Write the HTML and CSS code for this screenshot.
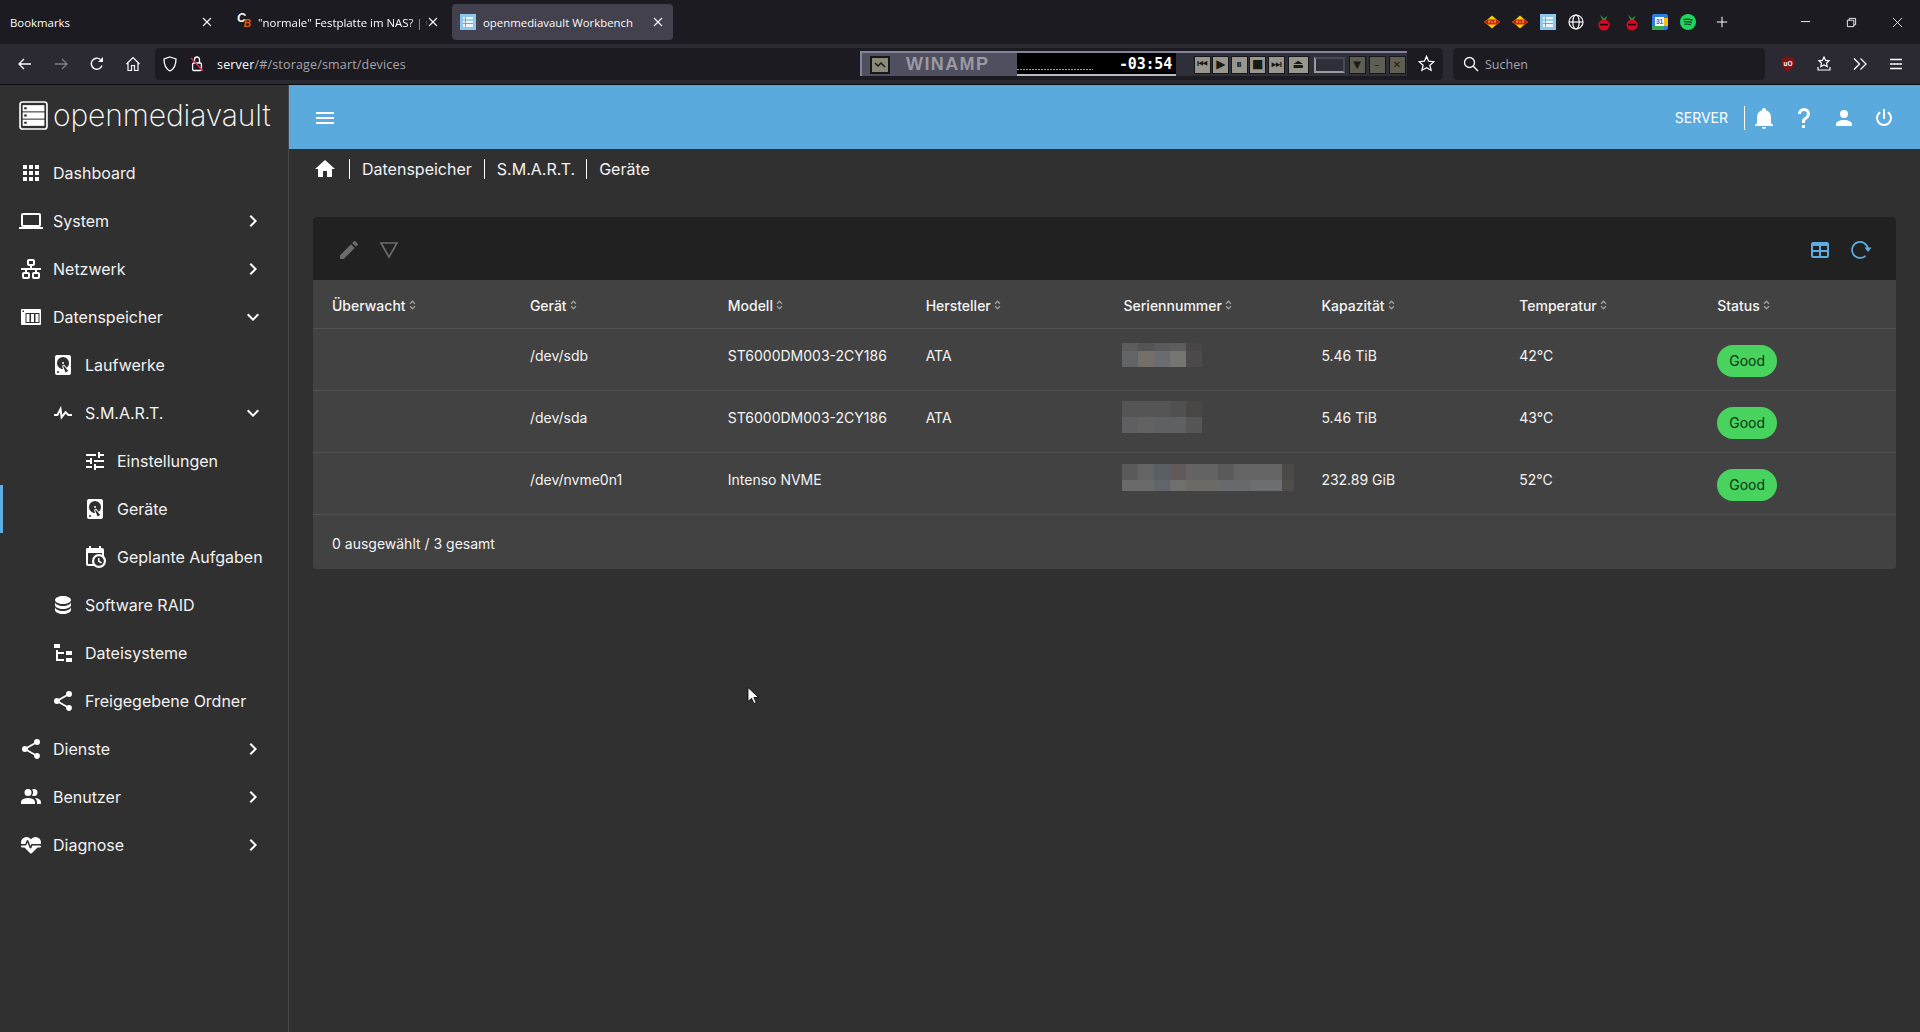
FILE: index.html
```html
<!DOCTYPE html>
<html lang="de">
<head>
<meta charset="utf-8">
<title>openmediavault Workbench</title>
<link rel="stylesheet" href="styles.css">
</head>
<body>
<svg class="defs" width="0" height="0" aria-hidden="true">
  <symbol id="i-apps" viewBox="0 0 24 24"><path d="M16,20H20V16H16M16,14H20V10H16M10,8H14V4H10M16,8H20V4H16M10,14H14V10H10M4,14H8V10H4M4,20H8V16H4M10,20H14V16H10M4,8H8V4H4V8Z"/></symbol>
  <symbol id="i-laptop" viewBox="0 0 24 24"><path d="M4,6H20V16H4M20,18A2,2 0 0,0 22,16V6C22,4.89 21.1,4 20,4H4C2.89,4 2,4.89 2,6V16A2,2 0 0,0 4,18H0V20H24V18H20Z"/></symbol>
  <symbol id="i-lan" viewBox="0 0 24 24"><path d="M10,2C8.89,2 8,2.89 8,4V7C8,8.11 8.89,9 10,9H11V11H2V13H6V15H5C3.89,15 3,15.89 3,17V20C3,21.11 3.89,22 5,22H9C10.11,22 11,21.11 11,20V17C11,15.89 10.11,15 9,15H8V13H16V15H15C13.89,15 13,15.89 13,17V20C13,21.11 13.89,22 15,22H19C20.11,22 21,21.11 21,20V17C21,15.89 20.11,15 19,15H18V13H22V11H13V9H14C15.11,9 16,8.11 16,7V4C16,2.89 15.11,2 14,2H10M10,4H14V7H10V4M5,17H9V20H5V17M15,17H19V20H15V17Z"/></symbol>
  <symbol id="i-nas" viewBox="0 0 24 24"><path fill-rule="evenodd" d="M3,4H21A1,1 0 0,1 22,5V19A1,1 0 0,1 21,20H3A1,1 0 0,1 2,19V5A1,1 0 0,1 3,4ZM3.5,5.5V7H5V5.5ZM6.5,8V18H20.5V8Z"/><path d="M7.5,9H10.5V17H7.5ZM12,9H15V17H12ZM16.5,9H19.5V17H16.5Z"/></symbol>
  <symbol id="i-hdd" viewBox="0 0 24 24"><path d="M6,2H18A2,2 0 0,1 20,4V20A2,2 0 0,1 18,22H6A2,2 0 0,1 4,20V4A2,2 0 0,1 6,2M12,4A6,6 0 0,0 6,10C6,13.31 8.69,16 12.1,16L11.22,13.77C10.95,13.29 11.11,12.68 11.59,12.4L12.45,11.9C12.93,11.63 13.54,11.79 13.82,12.27L15.74,14.69C17.12,13.59 18,11.9 18,10A6,6 0 0,0 12,4M12,9A1,1 0 0,1 13,10A1,1 0 0,1 12,11A1,1 0 0,1 11,10A1,1 0 0,1 12,9M7,18A1,1 0 0,0 6,19A1,1 0 0,0 7,20A1,1 0 0,0 8,19A1,1 0 0,0 7,18M12.09,13.27L14.58,19.58L17.17,18.08L12.95,12.77L12.09,13.27Z"/></symbol>
  <symbol id="i-pulse" viewBox="0 0 24 24"><path d="M3,13H5.79L10.1,4.79L11.28,13.75L14.5,9.66L17.83,13H21V15H17L14.67,12.67L9.92,18.73L8.94,11.31L7,15H3V13Z"/></symbol>
  <symbol id="i-tune" viewBox="0 0 24 24"><path d="M3,17V19H9V17H3M3,5V7H13V5H3M13,21V19H21V17H13V15H11V21H13M7,9V11H3V13H7V15H9V9H7M21,13V11H11V13H21M15,9H17V7H21V5H17V3H15V9Z"/></symbol>
  <symbol id="i-cal" viewBox="0 0 24 24"><path d="M5,8H19V3H18V1H16V3H8V1H6V3H5C3.9,3 3,3.9 3,5V8Z"/><path d="M15,13H16.5V15.82L18.94,17.23L18.19,18.53L15,16.69V13M19,8H5V19H9.67C9.24,18.09 9,17.07 9,16A7,7 0 0,1 16,9C17.07,9 18.09,9.24 19,9.67V8M5,21C3.89,21 3,20.1 3,19V5C3,3.89 3.89,3 5,3H6V1H8V3H16V1H18V3H19A2,2 0 0,1 21,5V11.1C22.24,12.36 23,14.09 23,16A7,7 0 0,1 16,23C14.09,23 12.36,22.24 11.1,21H5M16,11.15A4.85,4.85 0 0,0 11.15,16C11.15,18.68 13.32,20.85 16,20.85A4.85,4.85 0 0,0 20.85,16C20.85,13.32 18.68,11.15 16,11.15Z"/></symbol>
  <symbol id="i-db" viewBox="0 0 24 24"><path d="M12,3C7.58,3 4,4.79 4,7C4,9.21 7.58,11 12,11C16.42,11 20,9.21 20,7C20,4.79 16.42,3 12,3M4,9V12C4,14.21 7.58,16 12,16C16.42,16 20,14.21 20,12V9C20,11.21 16.42,13 12,13C7.58,13 4,11.21 4,9M4,14V17C4,19.21 7.58,21 12,21C16.42,21 20,19.21 20,17V14C20,16.21 16.42,18 12,18C7.58,18 4,16.21 4,14Z"/></symbol>
  <symbol id="i-tree" viewBox="0 0 24 24"><path d="M3,3H9V7H3V3M15,10H21V14H15V10M15,17H21V21H15V17M13,13H7V18H13V20H7L5,20V9H7V11H13V13Z"/></symbol>
  <symbol id="i-share" viewBox="0 0 24 24"><path d="M18,16.08C17.24,16.08 16.56,16.38 16.04,16.85L8.91,12.7C8.96,12.47 9,12.24 9,12C9,11.76 8.96,11.53 8.91,11.3L15.96,7.19C16.5,7.69 17.21,8 18,8A3,3 0 0,0 21,5A3,3 0 0,0 18,2A3,3 0 0,0 15,5C15,5.24 15.04,5.47 15.09,5.7L8.04,9.81C7.5,9.31 6.79,9 6,9A3,3 0 0,0 3,12A3,3 0 0,0 6,15C6.79,15 7.5,14.69 8.04,14.19L15.16,18.34C15.11,18.55 15.08,18.77 15.08,19C15.08,20.61 16.39,21.91 18,21.91C19.61,21.91 20.92,20.61 20.92,19A2.92,2.92 0 0,0 18,16.08Z"/></symbol>
  <symbol id="i-users" viewBox="0 0 24 24"><path d="M16 17V19H2V17S2 13 9 13 16 17 16 17M12.5 7.5A3.5 3.5 0 1 0 9 11A3.5 3.5 0 0 0 12.5 7.5M15.94 13A5.32 5.32 0 0 1 18 17V19H22V17S22 13.37 15.94 13M15 4A3.39 3.39 0 0 0 13.07 4.59A5 5 0 0 1 13.07 10.41A3.39 3.39 0 0 0 15 11A3.5 3.5 0 0 0 15 4Z"/></symbol>
  <symbol id="i-heart" viewBox="0 0 24 24"><path d="M7.5,4A5.5,5.5 0 0,0 2,9.5C2,10 2.09,10.5 2.22,11H6.3L7.57,7.63C7.87,6.83 9.05,6.75 9.43,7.63L11.5,13L12.09,11.58C12.22,11.25 12.57,11 13,11H21.78C21.91,10.5 22,10 22,9.5A5.5,5.5 0 0,0 16.5,4C14.64,4 13,4.93 12,6.36C11,4.93 9.36,4 7.5,4V4M3,12.5A1,1 0 0,0 2,13.5A1,1 0 0,0 3,14.5H5.44L11,20C12,20.9 12,20.9 13,20L18.56,14.5H21A1,1 0 0,0 22,13.5A1,1 0 0,0 21,12.5H13.4L12.47,14.8C12.07,15.81 10.92,15.67 10.55,14.83L8.5,9.5L7.54,11.83C7.39,12.21 7.05,12.5 6.6,12.5H3Z"/></symbol>
  <symbol id="i-right" viewBox="0 0 24 24"><path d="M8.59,16.58L13.17,12L8.59,7.41L10,6L16,12L10,18L8.59,16.58Z"/></symbol>
  <symbol id="i-down" viewBox="0 0 24 24"><path d="M7.41,8.58L12,13.17L16.59,8.58L18,10L12,16L6,10L7.41,8.58Z"/></symbol>
  <symbol id="i-sort" viewBox="0 0 8 12"><path d="M1.2,4.5L4,1.7L6.8,4.5M1.2,7.5L4,10.3L6.8,7.5" fill="none" stroke="currentColor" stroke-width="1.5"/></symbol>
  <symbol id="i-x" viewBox="0 0 12 12"><path d="M2,2L10,10M10,2L2,10" fill="none" stroke="currentColor" stroke-width="1.1"/></symbol>
  <symbol id="i-fritz" viewBox="0 0 16 14"><path d="M8,0.5L12,4L16,7L12,10L8,13.5L4,10L0,7L4,4Z" fill="#f5d000"/><path d="M0.3,7L3.5,4.6H12.5L15.7,7L12.5,9.4H3.5Z" fill="#cc1a14"/><path d="M4.5,6H6.5M5,6V8.3M8,6V8.3M10,6H12M11,6V8.3" stroke="#f5d000" stroke-width=".9"/></symbol>
  <symbol id="i-rasp" viewBox="0 0 12 17"><path d="M2,0.5L6,4.5L9.5,1.5L7.5,6.5H4.5Z" fill="#2f8f33"/><circle cx="6" cy="11" r="5.6" fill="#d00c22"/><rect x="2" y="9.8" width="8" height="1.6" fill="#1d0307"/></symbol>
  <symbol id="i-omv" viewBox="0 0 16 16"><rect width="16" height="16" fill="#8ec6ee"/><rect x="3" y="3" width="10" height="10" fill="#e9f4fb"/><path d="M3,6H13M3,9.5H13M5.5,3V13" stroke="#5dade2" stroke-width="1"/></symbol>
</svg>

<header class="tabbar">
  <div class="tab tab-bookmarks"><span class="tab-label">Bookmarks</span><svg class="tab-x"><use href="#i-x"/></svg></div>
  <div class="tab tab-forum"><span class="cb-icon"><span class="cb-c">C</span><span class="cb-b">B</span></span><span class="tab-label">"normale" Festplatte im NAS? | C</span><svg class="tab-x"><use href="#i-x"/></svg></div>
  <div class="tab tab-active"><svg class="fav"><use href="#i-omv"/></svg><span class="tab-label">openmediavault Workbench</span><svg class="tab-x"><use href="#i-x"/></svg></div>
  <div class="pinned">
    <span class="pin"><svg class="fav-wide"><use href="#i-fritz"/></svg></span>
    <span class="pin"><svg class="fav-wide"><use href="#i-fritz"/></svg></span>
    <span class="pin"><svg class="fav"><use href="#i-omv"/></svg></span>
    <span class="pin"><svg class="fav" viewBox="0 0 16 16"><circle cx="8" cy="8" r="7" fill="none" stroke="#fbfbfe" stroke-width="1.2"/><ellipse cx="8" cy="8" rx="3.2" ry="7" fill="none" stroke="#fbfbfe" stroke-width="1.2"/><path d="M1,8H15" stroke="#fbfbfe" stroke-width="1.2"/></svg></span>
    <span class="pin"><svg class="fav-tall"><use href="#i-rasp"/></svg></span>
    <span class="pin"><svg class="fav-tall"><use href="#i-rasp"/></svg></span>
    <span class="pin"><svg class="fav" viewBox="0 0 16 16"><rect width="16" height="16" rx="2" fill="#2f7de1"/><rect x="0" y="12" width="12" height="4" fill="#34a853"/><rect x="12" y="4" width="4" height="8" fill="#fbbc04"/><rect x="3" y="3" width="9" height="9" fill="#f2f6fc"/><text class="cal-text" x="7.5" y="10.4">31</text></svg></span>
    <span class="pin"><svg class="fav" viewBox="0 0 16 16"><circle cx="8" cy="8" r="8" fill="#1ed760"/><path d="M3.5,5.6C6.5,4.8 9.8,5 12.6,6.4M4,8C6.6,7.3 9.4,7.5 11.8,8.8M4.5,10.3C6.6,9.8 8.9,10 10.8,11" fill="none" stroke="#14331f" stroke-width="1.2"/></svg></span>
    <svg class="plus" viewBox="0 0 14 14"><path d="M7,1V13M1,7H13" stroke="#fbfbfe" stroke-width="1.2"/></svg>
  </div>
  <div class="winctl">
    <span class="winbtn"><svg class="ctl" viewBox="0 0 12 12"><path d="M1,5H11" stroke="#fbfbfe"/></svg></span>
    <span class="winbtn"><svg class="ctl" viewBox="0 0 12 12"><path d="M1.5,3.5H8.5V10.5H1.5ZM3.5,3.5V1.5H10.5V8.5H8.5" fill="none" stroke="#fbfbfe"/></svg></span>
    <span class="winbtn"><svg class="ctl" viewBox="0 0 12 12"><path d="M1,1L11,11M11,1L1,11" stroke="#fbfbfe" stroke-width=".9"/></svg></span>
  </div>
</header>

<nav class="navbar">
  <span class="nbtn"><svg class="nico" viewBox="0 0 16 16"><path d="M14,8H2.5M7,3L2,8L7,13" fill="none" stroke="#fbfbfe" stroke-width="1.3"/></svg></span>
  <span class="nbtn nbtn-off"><svg class="nico" viewBox="0 0 16 16"><path d="M2,8H13.5M9,3L14,8L9,13" fill="none" stroke="#fbfbfe" stroke-width="1.3"/></svg></span>
  <span class="nbtn"><svg class="nico" viewBox="0 0 16 16"><path d="M13,9.5A5.5,5.5 0 1 1 11.5,3.6" fill="none" stroke="#fbfbfe" stroke-width="1.4"/><path d="M14,1V6H9Z" fill="#fbfbfe"/></svg></span>
  <span class="nbtn"><svg class="nico" viewBox="0 0 16 16"><path d="M1.5,8L8,1.5L14.5,8M3,7V14.5H6.5V9.5H9.5V14.5H13V7" fill="none" stroke="#fbfbfe" stroke-width="1.2"/></svg></span>
  <div class="urlbar">
    <svg class="uico" viewBox="0 0 16 16"><path d="M8,1L14,3C14,9 12,13 8,15C4,13 2,9 2,3Z" fill="none" stroke="#fbfbfe" stroke-width="1.3"/></svg>
    <svg class="uico" viewBox="0 0 16 16"><path d="M5.5,7V3.5A2.5,2.5 0 0 1 10.5,3.5V7" fill="none" stroke="#fbfbfe" stroke-width="1.3"/><rect x="3.6" y="7" width="8.8" height="7.5" rx="1.2" fill="none" stroke="#fbfbfe" stroke-width="1.3"/><path d="M2,2L14,15" stroke="#e22850" stroke-width="1.4"/></svg>
    <span class="url"><span class="url-host">server</span>/#/storage/smart/devices</span>
    <div class="winamp">
      <span class="wa-logo"><svg class="wa-logo-ico" viewBox="0 0 12 10"><path d="M1,3L4,6L7,3L11,7" fill="none" stroke="#1a1a14" stroke-width="1.5"/></svg></span>
      <span class="wa-title">WINAMP</span>
      <span class="wa-display"><span class="wa-vis"></span><span class="wa-time">-03:54</span></span>
      <span class="wa-btns">
        <span class="wa-btn">⏮</span><span class="wa-btn">▶</span><span class="wa-btn">⏸</span><span class="wa-btn">■</span><span class="wa-btn">⏭</span>
      </span>
      <span class="wa-btn wa-eject">⏏</span>
      <span class="wa-slider"></span>
      <span class="wa-small">▼</span><span class="wa-small">–</span><span class="wa-small">✕</span>
    </div>
    <svg class="ustar" viewBox="0 0 16 16"><path d="M8,1.3L10,5.8L14.9,6.3L11.2,9.6L12.3,14.4L8,11.9L3.7,14.4L4.8,9.6L1.1,6.3L6,5.8Z" fill="none" stroke="#fbfbfe" stroke-width="1.2"/></svg>
  </div>
  <div class="searchbar">
    <svg class="uico" viewBox="0 0 16 16"><circle cx="6.5" cy="6.5" r="5" fill="none" stroke="#fbfbfe" stroke-width="1.3"/><path d="M10.3,10.3L15,15" stroke="#fbfbfe" stroke-width="1.4"/></svg>
    <span class="search-text">Suchen</span>
  </div>
  <span class="nbtn"><svg class="nico" viewBox="0 0 16 16"><path d="M8,0.5L14.5,2.5C14.5,9 12.5,13.5 8,15.5C3.5,13.5 1.5,9 1.5,2.5Z" fill="#7e1417"/><text class="ub-text" x="8" y="10">uO</text></svg></span>
  <span class="nbtn"><svg class="nico" viewBox="0 0 16 16"><path d="M8,1L9.6,4.4L13,4.8L10.5,7.2L11.2,10.6L8,8.9L4.8,10.6L5.5,7.2L3,4.8L6.4,4.4Z" fill="none" stroke="#fbfbfe" stroke-width="1.2"/><path d="M2,11V14H14V11" fill="none" stroke="#fbfbfe" stroke-width="1.2"/></svg></span>
  <span class="nbtn"><svg class="nico" viewBox="0 0 16 16"><path d="M2,2.5L7.5,8L2,13.5M8.5,2.5L14,8L8.5,13.5" fill="none" stroke="#fbfbfe" stroke-width="1.3"/></svg></span>
  <span class="nbtn"><svg class="nico" viewBox="0 0 16 16"><path d="M2,3.5H14M2,8H14M2,12.5H14" stroke="#fbfbfe" stroke-width="1.3"/></svg></span>
</nav>

<div class="app">
  <aside class="sidebar">
    <div class="brand">
      <svg class="brand-ico" viewBox="0 0 28 28"><rect x="1" y="1" width="26" height="26" rx="2.5" fill="none" stroke="#fff" stroke-width="1.6"/><rect x="3.5" y="4" width="21" height="6" fill="#fff"/><rect x="3.5" y="11" width="21" height="6" fill="#fff"/><rect x="3.5" y="18" width="21" height="6" fill="#fff"/><rect x="5" y="6" width="2.5" height="2" fill="#303030"/><rect x="5" y="13" width="2.5" height="2" fill="#303030"/><rect x="5" y="20" width="2.5" height="2" fill="#303030"/></svg>
      <span class="brand-text">openmediavault</span>
    </div>
    <ul class="menu">
      <li class="mi"><svg class="ic"><use href="#i-apps"/></svg><span class="ml">Dashboard</span></li>
      <li class="mi"><svg class="ic"><use href="#i-laptop"/></svg><span class="ml">System</span><svg class="ic chev"><use href="#i-right"/></svg></li>
      <li class="mi"><svg class="ic"><use href="#i-lan"/></svg><span class="ml">Netzwerk</span><svg class="ic chev"><use href="#i-right"/></svg></li>
      <li class="mi"><svg class="ic"><use href="#i-nas"/></svg><span class="ml">Datenspeicher</span><svg class="ic chev"><use href="#i-down"/></svg></li>
      <li class="mi l2"><svg class="ic"><use href="#i-hdd"/></svg><span class="ml">Laufwerke</span></li>
      <li class="mi l2"><svg class="ic"><use href="#i-pulse"/></svg><span class="ml">S.M.A.R.T.</span><svg class="ic chev"><use href="#i-down"/></svg></li>
      <li class="mi l3"><svg class="ic"><use href="#i-tune"/></svg><span class="ml">Einstellungen</span></li>
      <li class="mi l3 active"><svg class="ic"><use href="#i-hdd"/></svg><span class="ml">Geräte</span></li>
      <li class="mi l3"><svg class="ic"><use href="#i-cal"/></svg><span class="ml">Geplante Aufgaben</span></li>
      <li class="mi l2"><svg class="ic"><use href="#i-db"/></svg><span class="ml">Software RAID</span></li>
      <li class="mi l2"><svg class="ic"><use href="#i-tree"/></svg><span class="ml">Dateisysteme</span></li>
      <li class="mi l2"><svg class="ic"><use href="#i-share"/></svg><span class="ml">Freigegebene Ordner</span></li>
      <li class="mi"><svg class="ic"><use href="#i-share"/></svg><span class="ml">Dienste</span><svg class="ic chev"><use href="#i-right"/></svg></li>
      <li class="mi"><svg class="ic"><use href="#i-users"/></svg><span class="ml">Benutzer</span><svg class="ic chev"><use href="#i-right"/></svg></li>
      <li class="mi"><svg class="ic"><use href="#i-heart"/></svg><span class="ml">Diagnose</span><svg class="ic chev"><use href="#i-right"/></svg></li>
    </ul>
  </aside>

  <div class="content">
    <div class="topbar">
      <svg class="ic"><path d="M3,6H21V8H3V6M3,11H21V13H3V11M3,16H21V18H3V16Z"/></svg>
      <div class="top-right">
        <span class="host">SERVER</span>
        <svg class="ic"><path d="M21,19V20H3V19L5,17V11C5,7.9 7.03,5.17 10,4.29C10,4.19 10,4.1 10,4A2,2 0 0,1 12,2A2,2 0 0,1 14,4C14,4.1 14,4.19 14,4.29C16.97,5.17 19,7.9 19,11V17L21,19M14,21A2,2 0 0,1 12,23A2,2 0 0,1 10,21"/></svg>
        <svg class="ic"><path d="M10,19H13V22H10V19M12,2C17.35,2.22 19.68,7.62 16.5,11.67C15.67,12.67 14.33,13.33 13.67,14.17C13,15 13,16 13,17H10C10,15.33 10,13.92 10.67,12.92C11.33,11.92 12.67,11.33 13.5,10.67C15.92,8.43 15.32,5.26 12,5A3,3 0 0,0 9,8H6A6,6 0 0,1 12,2Z"/></svg>
        <svg class="ic"><path d="M12,4A4,4 0 0,1 16,8A4,4 0 0,1 12,12A4,4 0 0,1 8,8A4,4 0 0,1 12,4M12,14C16.42,14 20,15.79 20,18V20H4V18C4,15.79 7.58,14 12,14Z"/></svg>
        <svg class="ic"><path d="M16.56,5.44L15.11,6.89C16.84,7.94 18,9.83 18,12A6,6 0 0,1 12,18A6,6 0 0,1 6,12C6,9.83 7.16,7.94 8.88,6.88L7.44,5.44C5.36,6.88 4,9.28 4,12A8,8 0 0,0 12,20A8,8 0 0,0 20,12C20,9.28 18.64,6.88 16.56,5.44M13,3H11V13H13"/></svg>
      </div>
    </div>

    <main class="page">
      <div class="crumbs">
        <svg class="ic"><path d="M10,20V14H14V20H19V12H22L12,3L2,12H5V20H10Z"/></svg>
        <span class="crumb">Datenspeicher</span>
        <span class="crumb">S.M.A.R.T.</span>
        <span class="crumb">Geräte</span>
      </div>

      <section class="card">
        <div class="card-tools">
          <svg class="ic tool-off"><path d="M20.71,7.04C21.1,6.65 21.1,6 20.71,5.63L18.37,3.29C18,2.9 17.35,2.9 16.96,3.29L15.12,5.12L18.87,8.87M3,17.25V21H6.75L17.81,9.93L14.06,6.18L3,17.25Z"/></svg>
          <svg class="ic tool-off"><path class="outline" d="M4,5H20L12,19Z"/></svg>
          <span class="tools-gap"></span>
          <svg class="ic tool-on"><path d="M5,4H19A2,2 0 0,1 21,6V18A2,2 0 0,1 19,20H5A2,2 0 0,1 3,18V6A2,2 0 0,1 5,4M5,8V12H11V8H5M13,8V12H19V8H13M5,14V18H11V14H5M13,14V18H19V14H13Z"/></svg>
          <svg class="ic tool-on"><path class="outline" d="M17.5,17.8A8,8 0 1 1 20,11"/><path d="M16.5,9.5H23.5L20,14Z"/></svg>
        </div>
        <div class="row head">
          <span class="th">Überwacht<svg class="sort"><use href="#i-sort"/></svg></span>
          <span class="th">Gerät<svg class="sort"><use href="#i-sort"/></svg></span>
          <span class="th">Modell<svg class="sort"><use href="#i-sort"/></svg></span>
          <span class="th">Hersteller<svg class="sort"><use href="#i-sort"/></svg></span>
          <span class="th">Seriennummer<svg class="sort"><use href="#i-sort"/></svg></span>
          <span class="th">Kapazität<svg class="sort"><use href="#i-sort"/></svg></span>
          <span class="th">Temperatur<svg class="sort"><use href="#i-sort"/></svg></span>
          <span class="th">Status<svg class="sort"><use href="#i-sort"/></svg></span>
        </div>
        <div class="row body">
          <span class="td"></span><span class="td">/dev/sdb</span><span class="td">ST6000DM003-2CY186</span><span class="td">ATA</span>
          <span class="td serial"><span class="blur blur-1"><i></i><i></i></span></span>
          <span class="td">5.46 TiB</span><span class="td">42°C</span><span class="td status"><span class="badge">Good</span></span>
        </div>
        <div class="row body">
          <span class="td"></span><span class="td">/dev/sda</span><span class="td">ST6000DM003-2CY186</span><span class="td">ATA</span>
          <span class="td serial"><span class="blur blur-2"><i></i><i></i></span></span>
          <span class="td">5.46 TiB</span><span class="td">43°C</span><span class="td status"><span class="badge">Good</span></span>
        </div>
        <div class="row body">
          <span class="td"></span><span class="td">/dev/nvme0n1</span><span class="td">Intenso NVME</span><span class="td"></span>
          <span class="td serial"><span class="blur blur-3"><i></i><i></i></span></span>
          <span class="td">232.89 GiB</span><span class="td">52°C</span><span class="td status"><span class="badge">Good</span></span>
        </div>
        <div class="card-foot">0 ausgewählt / 3 gesamt</div>
      </section>
    </main>
  </div>
</div>

<svg class="cursor" viewBox="0 0 12 18"><path d="M1,1V15L4.5,11.8L7,17L9.2,16L6.8,11H11.5Z" fill="#fff" stroke="#000" stroke-width=".8"/></svg>
</body>
</html>
```
FILE: styles.css
```css
* { box-sizing: border-box; }
html, body { margin: 0; height: 100%; overflow: hidden; }
body {
  display: flex;
  flex-direction: column;
  background: #303030;
  color: #fff;
  font-family: Inter, "Liberation Sans", sans-serif;
  font-size: 14px;
}
.defs { position: absolute; }

/* Browser tab strip */
.tabbar {
  height: 44px;
  flex: none;
  display: flex;
  align-items: center;
  background: #1c1b22;
  font-family: "Open Sans", "Noto Sans", sans-serif;
  font-size: 11.4px;
  color: #fbfbfe;
}
.tab {
  height: 36px;
  display: flex;
  align-items: center;
  border-radius: 4px;
  overflow: hidden;
}
.tab-label { white-space: nowrap; flex: 1; min-width: 0; }
.tab-x { width: 12px; height: 12px; flex: none; color: #fbfbfe; }
.tab-bookmarks { width: 213px; padding-left: 10px; margin-right: 15px; }
.tab-forum { width: 215px; padding-left: 9px; padding-right: 4px; margin-right: 9px; }
.tab-forum .tab-label { -webkit-mask-image: linear-gradient(90deg, #000 90%, rgba(0,0,0,.25)); mask-image: linear-gradient(90deg, #000 90%, rgba(0,0,0,.25)); }
.tab-active { width: 221px; padding: 0 9px 0 8px; background: #42414d; }
.cb-icon { width: 14px; margin-right: 7px; font-family: "Liberation Sans", sans-serif; font-weight: 700; font-style: italic; font-size: 12px; line-height: 1; display: flex; flex: none; }
.cb-c { color: #fff; margin-top: -3px; }
.cb-b { color: #e8590c; margin-top: 4px; margin-left: -2px; font-size: 10px; }
.fav { width: 16px; height: 16px; flex: none; display: block; }
.fav-wide { width: 16px; height: 14px; display: block; }
.fav-tall { width: 12px; height: 17px; display: block; }
.tab-active .fav { margin-right: 7px; }
.pinned { display: flex; align-items: center; margin-left: auto; }
.pin { width: 28px; display: flex; justify-content: center; }
.plus { width: 12px; height: 12px; margin: 0 54px 0 14px; }
.winctl { display: flex; }
.winbtn { width: 46px; height: 44px; display: flex; align-items: center; justify-content: center; }
.ctl { width: 11px; height: 11px; }
.cal-text { font-family: "Liberation Sans", sans-serif; font-size: 6.5px; font-weight: 700; fill: #2f6fd0; text-anchor: middle; }
.ub-text { font-family: "Liberation Sans", sans-serif; font-size: 6.5px; font-weight: 700; fill: #fff; text-anchor: middle; }

/* Browser toolbar */
.navbar {
  height: 41px;
  flex: none;
  display: flex;
  align-items: center;
  padding: 0 5px 1px 7px;
  background: #2b2a33;
  border-bottom: 1px solid #0c0c0d;
  font-family: "Open Sans", "Noto Sans", sans-serif;
  font-size: 12.5px;
}
.nbtn { width: 36px; height: 32px; flex: none; display: flex; align-items: center; justify-content: center; }
.nbtn-off { opacity: .4; }
.nico { width: 16px; height: 16px; }
.uico { width: 16px; height: 16px; flex: none; }
.urlbar {
  width: 1288px;
  height: 32px;
  margin-left: 4px;
  padding-left: 7px;
  display: flex;
  align-items: center;
  gap: 11px;
  border-radius: 4px;
  background: #1c1b22;
}
.url { color: #a5a5ab; margin: 2px 0 0 1px; letter-spacing: .17px; }
.url-host { color: #fbfbfe; }
.ustar { width: 17px; height: 17px; flex: none; margin: 0 8px 0 0; }
.searchbar {
  width: 312px;
  height: 32px;
  margin: 0 5px 0 10px;
  padding-left: 10px;
  display: flex;
  align-items: center;
  gap: 6px;
  border-radius: 4px;
  background: #1c1b22;
}
.search-text { color: #a5a5ab; margin-top: 2px; }

/* Winamp deskband */
.winamp {
  width: 547px;
  height: 25px;
  margin-left: auto;
  display: flex;
  align-items: center;
  background: linear-gradient(90deg, #4f4f60 0, #4f4f60 157px, #2f2f3a 157px);
  border-top: 2px solid #84849a;
  border-left: 2px solid #84849a;
  font-family: "DejaVu Sans", sans-serif;
  color: #1a1a14;
}
.wa-logo { width: 20px; height: 18px; margin-left: 8px; flex: none; background: #8b8a78; border: 2px solid #17171b; display: flex; align-items: center; justify-content: center; }
.wa-logo-ico { width: 12px; height: 10px; }
.wa-title { width: 91px; margin-left: 16px; flex: none; font-family: "Liberation Sans", sans-serif; font-size: 18px; font-weight: 700; letter-spacing: 1.4px; color: #9a9aa2; white-space: nowrap; }
.wa-display { width: 159px; height: 23px; margin-left: 20px; flex: none; padding: 0 4px 0 0; display: flex; justify-content: flex-end; align-items: center; position: relative; background: #000; border-bottom: 2px solid #b9b9bf; }
.wa-vis { position: absolute; left: 0; bottom: 4px; width: 76px; height: 1px; background: repeating-linear-gradient(90deg, #a0a0a0 0 2px, transparent 2px 3px); }
.wa-time { font-family: "DejaVu Sans Mono", monospace; font-size: 15px; font-weight: 700; color: #fff; letter-spacing: -.2px; }
.wa-btns { display: flex; margin-left: 18px; gap: 1.4px; flex: none; }
.wa-btn { width: 17px; height: 18px; flex: none; background: #98968d; border: 1px solid #17171b; font-size: 12px; line-height: 15px; text-align: center; overflow: hidden; }
.wa-eject { width: 21px; margin-left: 3px; }
.wa-slider { width: 31px; height: 16px; margin: 0 4px 0 5px; flex: none; border: 2px solid #9a9a9e; border-top-color: #4a4a52; border-right-color: #4a4a52; background: #2f2f3a; }
.wa-small { width: 17px; height: 18px; margin-right: 3px; flex: none; background: #5f5e52; border: 1px solid #17171b; font-size: 10px; line-height: 16px; text-align: center; overflow: hidden; }

/* App shell */
.app { flex: 1; min-height: 0; display: flex; }
.sidebar { width: 289px; flex: none; background: #303030; border-right: 1px solid #474747; }
.brand { height: 64px; display: flex; align-items: center; padding: 0 0 4px 19px; gap: 5px; }
.brand-ico { width: 29px; height: 29px; flex: none; }
.brand-text { font-size: 30px; font-weight: 200; line-height: 1; letter-spacing: -.1px; color: #fff; }
.menu { list-style: none; margin: 0; padding: 0; }
.mi { height: 48px; display: flex; align-items: center; padding-left: 19px; padding-right: 23px; gap: 10px; font-size: 16px; color: #f2f2f2; position: relative; }
.l2 { padding-left: 51px; }
.l3 { padding-left: 83px; }
.ml { flex: 1; white-space: nowrap; }
.ic { width: 24px; height: 24px; flex: none; fill: #fff; }
.chev { margin-left: auto; }
.active::before { content: ""; position: absolute; left: 0; top: 0; bottom: 0; width: 3px; background: #5dade2; }

.content { flex: 1; min-width: 0; display: flex; flex-direction: column; }
.topbar { height: 64px; flex: none; display: flex; align-items: center; justify-content: space-between; padding: 2px 24px 0; background: #5aaade; }
.top-right { display: flex; align-items: center; gap: 16px; }
.host { font-size: 14px; padding-right: 16px; margin-right: -9px; line-height: 24px; border-right: 1px solid #fff; }
.page { flex: 1; padding: 0 24px; }
.crumbs { height: 40px; margin-bottom: 28px; display: flex; align-items: center; font-size: 16px; color: #f2f2f2; }
.crumb { margin-left: 12px; padding-left: 12px; line-height: 20px; border-left: 1px solid #fff; }
.crumb:last-child { margin-left: 11px; }

.card { border-radius: 4px; overflow: hidden; background: #424242; }
.card-tools { height: 63px; display: flex; align-items: center; gap: 16px; padding: 2px 24px 0; background: #212121; }
.tools-gap { flex: 1; }
.tool-off { fill: #6b6b6b; }
.tool-on { fill: #5dade2; }
.outline { fill: none; stroke-width: 1.7; }
.tool-off .outline { stroke: #6b6b6b; }
.tool-on .outline { stroke: #5dade2; }
.row { display: grid; grid-template-columns: repeat(8, 1fr); align-items: center; padding-top: 2px; border-bottom: 1px solid #515151; }
.head { height: 49px; }
.body { height: 62px; }
.th { padding-left: 19px; font-weight: 450; color: #f4f4f4; display: flex; align-items: center; gap: 3px; }
.sort { width: 7px; height: 12px; color: #a0a0a0; }
.td { padding-left: 19px; padding-bottom: 10px; color: #f4f4f4; }
.status { padding-bottom: 0; }
.serial { padding-bottom: 12px; }
.badge { display: inline-flex; align-items: center; justify-content: center; width: 60px; height: 32px; border-radius: 16px; background: #47d35e; color: #0b3513; font-size: 14px; }
.blur { display: flex; flex-direction: column; margin-left: -2px; }
.blur i { display: block; }
.blur-1 i:first-child { height: 8px; width: 80px; background: linear-gradient(90deg, #5c5c5c 0 16px, #545454 16px 32px, #5a5a5c 32px 48px, #5d5d5d 48px 64px, #484646 64px); }
.blur-1 i:last-child { height: 16px; width: 80px; background: linear-gradient(90deg, #636466 0 16px, #727069 16px 32px, #6a6c70 32px 48px, #757572 48px 64px, #4c4a4a 64px); }
.blur-2 i:first-child { height: 16px; width: 80px; background: linear-gradient(90deg, #555 0 48px, #505050 48px 64px, #4b4646 64px); }
.blur-2 i:last-child { height: 16px; width: 80px; background: linear-gradient(90deg, #5f5f61 0 16px, #626262 16px 32px, #5e6062 32px 64px, #565656 64px); }
.blur-3 { margin-top: -2px; }
.blur-3 i:first-child { height: 16px; width: 172px; background: linear-gradient(90deg, #5a5a5a 0 16px, #646464 16px 32px, #5a5f64 32px 48px, #605a5a 48px 64px, #636363 64px 96px, #5a5a5a 96px 112px, #646464 112px 160px, #4c4a48 160px); }
.blur-3 i:last-child { height: 11px; width: 172px; background: linear-gradient(90deg, #6a6a6a 0 32px, #616469 32px 48px, #6f6f6f 48px 64px, #6c6a66 64px 96px, #68696b 96px 128px, #6d6e70 128px 160px, #4f4d4a 160px); }
.card-foot { height: 54px; padding: 2px 19px 0; display: flex; align-items: center; color: #f4f4f4; }

.cursor { position: absolute; left: 747px; top: 686px; width: 12px; height: 19px; }
```
